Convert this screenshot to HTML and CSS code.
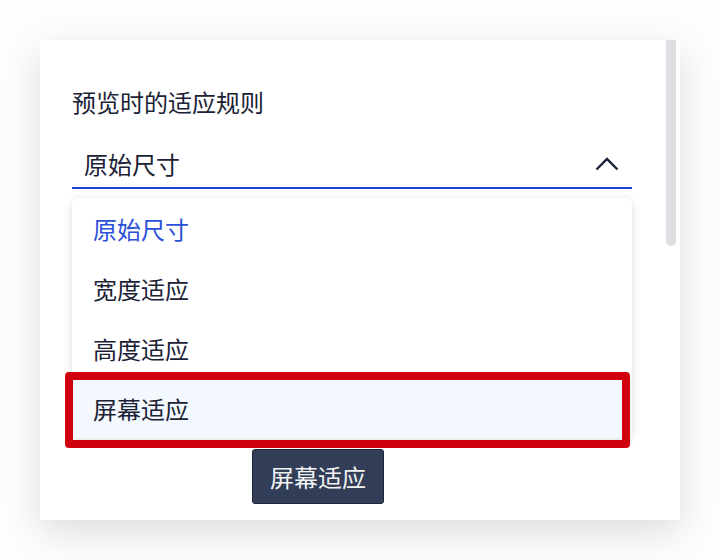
FILE: index.html
```html
<!DOCTYPE html>
<html lang="zh">
<head>
<meta charset="utf-8">
<title>预览时的适应规则</title>
<link rel="stylesheet" href="styles.css">
</head>
<body>
<div class="card">
  <div class="scroll-thumb"></div>
  <div class="content">
    <div class="label">预览时的适应规则</div>
    <div class="select">
      <span class="value">原始尺寸</span>
      <svg class="chevron" width="24" height="14" viewBox="0 0 24 14"><path d="M1.5 12.5 L12 2 L22.5 12.5" fill="none" stroke="#1b2236" stroke-width="2.4"/></svg>
    </div>
    <ul class="menu">
      <li class="item selected">原始尺寸</li>
      <li class="item">宽度适应</li>
      <li class="item">高度适应</li>
      <li class="item hover">屏幕适应</li>
    </ul>
  </div>
  <div class="highlight-box"></div>
  <div class="tooltip">屏幕适应</div>
</div>
</body>
</html>
```
FILE: styles.css
```css
* { box-sizing: border-box; }
html, body { margin: 0; padding: 0; }
body {
  background: #fdfdfd;
  padding: 40px;
  font-family: "Noto Sans CJK SC", "Noto Sans", sans-serif;
  color: #1b2236;
}
.card {
  position: relative;
  width: 640px;
  height: 480px;
  background: #ffffff;
  box-shadow: 0 12px 36px rgba(0, 0, 0, 0.13);
}
.scroll-thumb {
  position: absolute;
  top: 0;
  right: 4px;
  width: 10px;
  height: 206px;
  background: #dfdfe3;
  border-radius: 0 0 5px 5px;
}
.content {
  padding: 50px 48px 0 32px;
}
.label {
  font-size: 24px;
  line-height: 24px;
  height: 24px;
}
.select {
  margin-top: 26px;
  height: 49px;
  border-bottom: 2px solid #1f41d1;
  display: flex;
  align-items: center;
  justify-content: space-between;
  padding: 0 12px 0 12px;
}
.value {
  font-size: 24px;
  line-height: 24px;
}
.chevron {
  margin-right: 1px;
}
.menu {
  list-style: none;
  margin: 9px 0 0 0;
  padding: 0;
  background: #ffffff;
  border-radius: 6px;
  box-shadow: 0 2px 8px rgba(0, 0, 0, 0.14);
  overflow: hidden;
}
.item {
  height: 60px;
  display: flex;
  align-items: center;
  padding-left: 21px;
  font-size: 24px;
}
.item.selected { color: #2b50d8; }
.item.hover { background: #f3f7fe; }
.highlight-box {
  position: absolute;
  left: 25px;
  top: 332px;
  width: 565px;
  height: 76px;
  border: 8px solid #d0000f;
  border-radius: 4px;
}
.tooltip {
  position: absolute;
  left: 212px;
  top: 409px;
  width: 132px;
  height: 55px;
  background: #323e58;
  border: 1px solid #1e2637;
  border-radius: 3px;
  color: #f2f2f2;
  font-size: 24px;
  display: flex;
  align-items: center;
  justify-content: center;
}
```
